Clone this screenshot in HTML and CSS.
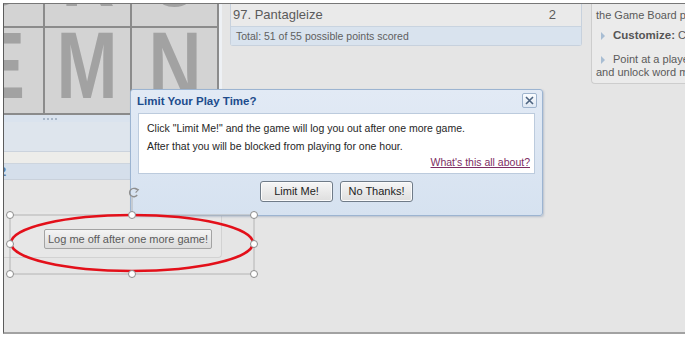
FILE: index.html
```html
<!DOCTYPE html>
<html lang="en">
  <head>
    <meta charset="UTF-8" />
    <title>Limit Your Play Time?</title>
    <link rel="stylesheet" href="styles.css">
  </head>

  <body>
    <div class="frame">
      <div class="left-col">
        <div class="board-wrap">
          <div class="board">
            <div class="tiles">
              <div class="tile top"><span>D</span></div>
              <div class="tile top"><span>R</span></div>
              <div class="tile top"><span>O</span></div>
              <div class="tile"><span>E</span></div>
              <div class="tile"><span>M</span></div>
              <div class="tile"><span>N</span></div>
            </div>
          </div>
        </div>
        <div class="grip"><i></i><i></i><i></i><i></i></div>
        <div class="band-a"></div>
        <div class="band-b"></div>
        <div class="band-c">2</div>
        <div class="option-box">
          <a href="javascript:void (0);" class="log-off">Log me off after one more game!</a>
        </div>
      </div>

      <div class="right-col">
        <div class="scores">
          <div class="score-row">
            <span>97. Pantagleize</span>
            <span>2</span>
          </div>
          <div class="score-total">Total: 51 of 55 possible points scored</div>
        </div>
        <div class="help">
          <p>the Game Board panel.</p>
          <p class="tip"><b>Customize:</b> Choose</p>
          <p class="tip">Point at a player's name<br /><span class="wrap">and unlock word meanings</span></p>
        </div>
      </div>

      <div class="dialog">
        <div class="d-head">
          <h5>Limit Your Play Time?</h5>
          <a href="javascript:void (0);" class="d-close">
            <svg width="9" height="9" viewBox="0 0 9 9"><path d="M1 1 L8 8 M8 1 L1 8" stroke="#4d6480" stroke-width="1.6" fill="none"/></svg>
          </a>
        </div>
        <div class="d-body">
          <p>Click "Limit Me!" and the game will log you out after one more game.</p>
          <p>After that you will be blocked from playing for one hour.</p>
          <a href="javascript:void (0);" class="d-link">What's this all about?</a>
        </div>
        <div class="d-foot">
          <a href="javascript:void (0);" class="d-btn">Limit Me!</a>
          <a href="javascript:void (0);" class="d-btn">No Thanks!</a>
        </div>
      </div>

      <svg class="markup" width="682" height="333" viewBox="0 0 682 333">
        <g transform="translate(-3,-3)">
          <rect x="10" y="215" width="244" height="59" fill="none" stroke="#b4b4b4" stroke-width="1"/>
          <line x1="132" y1="197" x2="132" y2="215" stroke="#b4b4b4"/>
          <ellipse cx="132" cy="243" rx="121" ry="28" fill="none" stroke="#e3101a" stroke-width="2.6"/>
          <path d="M136.8 189.6 A4.2 4.2 0 1 0 137.2 195" fill="none" stroke="#8f8f8f" stroke-width="1.4"/>
          <path d="M134.6 188 L138.3 189.8 L135.6 192.6" fill="none" stroke="#8f8f8f" stroke-width="1.2"/>
          <g fill="#fff" stroke="#8c8c8c" stroke-width="1">
            <circle cx="10" cy="215" r="3.5"/>
            <circle cx="132" cy="215" r="3.5"/>
            <circle cx="254" cy="215" r="3.5"/>
            <circle cx="10" cy="244" r="3.5"/>
            <circle cx="254" cy="244" r="3.5"/>
            <circle cx="10" cy="274" r="3.5"/>
            <circle cx="132" cy="274" r="3.5"/>
            <circle cx="254" cy="274" r="3.5"/>
          </g>
        </g>
      </svg>
    </div>
  </body>
</html>
```

FILE: styles.css
```css
* {
  margin: 0;
  padding: 0;
  box-sizing: border-box;
}
body {
  background-color: #fff;
  font-family: 'Liberation Sans', Arial, sans-serif;
  color: #555;
}
a {
  text-decoration: none;
  color: #333;
}
.frame {
  position: relative;
  margin: 3px 0 0 3px;
  width: 682px;
  height: 331px;
  display: flex;
  overflow: hidden;
  background-color: #e5e5e5;
  border-left: 1px solid #5c5c5c;
  border-top: 1px solid #777;
  border-bottom: 2px solid #a2a2a2;
}

/* left column: board */
.left-col {
  width: 218px;
  flex: none;
  display: flex;
  flex-direction: column;
}
.board-wrap {
  display: flex;
  background-color: #eef1f5;
}
.board {
  width: 215px;
  height: 111px;
  overflow: hidden;
  background-color: #8b8b8b;
  border-right: 2px solid #8b8b8b;
}
.tiles {
  display: grid;
  grid-template-columns: repeat(3, 85px);
  grid-auto-rows: 85px;
  gap: 2px;
  margin: -63px 0 0 -46px;
}
.tile {
  background-color: #d3d3d3;
  display: flex;
  align-items: center;
  justify-content: center;
  overflow: hidden;
}
.tile span {
  font-size: 94px;
  font-weight: bold;
  color: #a2a2a2;
  line-height: 1;
  margin-top: -9px;
  transform: scaleX(0.78);
}
.tile.top span {
  margin-top: -20px;
}
.grip {
  height: 7px;
  background-color: #dae3ee;
  display: flex;
  gap: 2px;
  align-items: center;
  padding-left: 39px;
}
.grip i {
  width: 2px;
  height: 2px;
  background-color: #a9b7c8;
}
.band-a {
  height: 30px;
  background-color: #dee5ed;
  border-bottom: 1px solid #cbd3dd;
}
.band-b {
  height: 12px;
  background-color: #ededea;
  border-bottom: 1px solid #cdd5de;
}
.band-c {
  height: 16px;
  background-color: #d5dfeb;
  border-bottom: 1px solid #c9d1db;
  color: #5e7ea4;
  font-weight: bold;
  font-size: 13px;
  line-height: 16px;
  margin-left: -5px;
}
.option-box {
  margin-top: 32px;
  width: 218px;
  height: 46px;
  padding: 17px 0 0 40px;
  background-color: #e7e7e7;
  border-right: 1px solid #d2d2d2;
  border-bottom: 1px solid #d2d2d2;
  border-bottom-right-radius: 4px;
}
.log-off {
  display: inline-block;
  width: 168px;
  height: 20px;
  line-height: 18px;
  text-align: center;
  font-size: 11px;
  color: #5a5a5a;
  border: 1px solid #a3a3a3;
  border-radius: 2px;
  background: linear-gradient(#f4f4f4, #dcdcdc);
}

/* right column */
.right-col {
  flex: 1;
  display: flex;
  gap: 9px;
  padding-left: 8px;
  align-items: flex-start;
}
.scores {
  width: 352px;
  flex: none;
  border: 1px solid #c7d1dd;
  border-top: 0;
  border-radius: 0 0 3px 3px;
  background-color: #eaeaea;
}
.score-row {
  display: flex;
  justify-content: space-between;
  height: 22px;
  line-height: 22px;
  padding: 0 25px 0 2px;
  font-size: 13px;
  color: #5a5a5a;
}
.score-total {
  height: 19px;
  line-height: 18px;
  padding-left: 5px;
  font-size: 10.5px;
  color: #5f5f5f;
  background-color: #d9e3ee;
  border-top: 1px solid #c9d4e0;
}
.help {
  flex: 1;
  height: 80px;
  padding: 5px 0 0 4px;
  white-space: nowrap;
  font-size: 11px;
  color: #5a5a5a;
  background-color: #ebebeb;
  border-left: 1px solid #cdcdcd;
  border-bottom: 1px solid #cdcdcd;
  border-bottom-left-radius: 4px;
}
.help p {
  line-height: 13px;
}
.help .tip {
  position: relative;
  margin-top: 7px;
  padding-left: 17px;
}
.help .tip + .tip {
  margin-top: 11px;
}
.help .tip::before {
  content: "";
  position: absolute;
  left: 5px;
  top: 3px;
  border-left: 4px solid #a8bdd3;
  border-top: 4px solid transparent;
  border-bottom: 4px solid transparent;
}
.help .tip b {
  font-size: 11.5px;
  color: #555;
}
.help .wrap {
  margin-left: -17px;
}

/* dialog */
.dialog {
  position: absolute;
  left: 126px;
  top: 85px;
  width: 413px;
  height: 127px;
  padding: 0 7px;
  background: linear-gradient(#e2eaf5, #d6e2f0);
  border: 1px solid #9cb4d1;
  border-radius: 3px;
  box-shadow: 1px 1px 2px rgba(120, 140, 170, 0.4);
}
.d-head {
  display: flex;
  justify-content: space-between;
  align-items: center;
  height: 21px;
}
.d-head h5 {
  font-size: 11.5px;
  color: #1d4c8c;
  margin-left: -1px;
}
.d-close {
  display: flex;
  align-items: center;
  justify-content: center;
  width: 15px;
  height: 15px;
  margin-right: -2px;
  border: 1px solid #9fb4cd;
  border-radius: 2px;
  background: linear-gradient(#fafcff, #dfe8f3);
}
.d-body {
  height: 61px;
  margin-top: 2px;
  padding: 5px 0 0 8px;
  background-color: #fff;
  border: 1px solid #bccbdd;
  font-size: 10.5px;
  color: #262626;
}
.d-body p {
  line-height: 18px;
}
.d-link {
  display: block;
  text-align: right;
  padding-right: 4px;
  line-height: 14px;
  color: #7d2c63;
  text-decoration: underline;
}
.d-foot {
  display: flex;
  justify-content: center;
  gap: 7px;
  padding-top: 7px;
}
.d-btn {
  width: 73px;
  height: 21px;
  line-height: 19px;
  text-align: center;
  font-size: 11px;
  color: #222;
  border: 1px solid #6f7b88;
  border-radius: 3px;
  background: linear-gradient(#f6f6f6, #dedede);
  box-shadow: inset 0 0 0 1px #fbfbfb;
}

/* screenshot markup overlay */
.markup {
  position: absolute;
  left: -1px;
  top: -1px;
  pointer-events: none;
}
```
